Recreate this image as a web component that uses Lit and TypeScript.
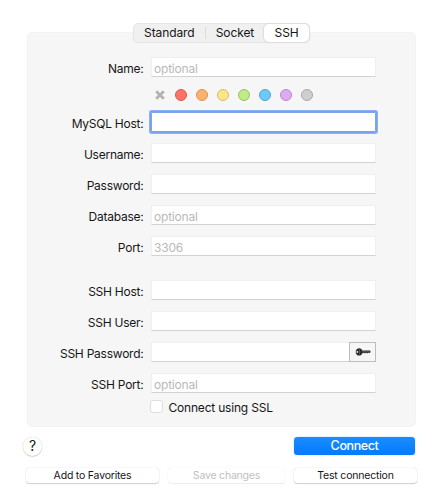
import { LitElement, html, css, nothing } from "lit";
import { customElement, property } from "lit/decorators.js";

@customElement("form-row")
class FormRow extends LitElement {
  @property() label = "";
  @property() hint = "";
  @property({ type: Boolean }) focused = false;
  @property({ type: Boolean }) secret = false;

  static styles = css`
    :host { display: flex; height: 31px; box-sizing: border-box; padding-top: 6px; }
    .label { width: 116.5px; text-align: right; line-height: 23px; margin-right: 7.5px; white-space: nowrap; letter-spacing: -.24px; }
    .field { display: flex; width: 225px; height: 20px; box-sizing: border-box; background: #fff;
      border: 1px solid #efefef; border-bottom-color: #d2d2d2; line-height: 21px; padding-left: 2px; color: #b9b9b9; letter-spacing: -.2px; }
    .focused { border: 0; box-shadow: 0 0 0 1px #74a3ea, 0 0 0 2px #8ab2f4, inset 0 0 0 1px #7ba5e8; height: 20px; border-radius: 1px; }
    .secret { width: 199px; border-right: 0; }
    .key { width: 27px; height: 20px; box-sizing: border-box; border: 1px solid #bdbdbd; background: #f6f6f6;
      display: flex; align-items: center; justify-content: center; margin-left: -1px; }
    .key svg { display: block; }
  `;

  render() {
    return html`
      <div class="label">${this.label}:</div>
      <div class="field ${this.focused ? "focused" : ""} ${this.secret ? "secret" : ""}">${this.hint}</div>
      ${this.secret
        ? html`<div class="key">
            <svg width="16" height="10" viewBox="0 0 16 10">
              <path fill="#2c2c2c" fill-rule="evenodd" d="M4.200 1.200C6 1.200 7 2.400 7.300 3.500H15l.7 1.200-.8 1.400h-1l-.6-.6-.7.7h-.9l-.6-.7-.7.7H9.500l-.6-.6-.7.6h-1C6.800 7.500 5.800 8.600 4.200 8.600 2.200 8.600.700 7 .700 4.900S2.200 1.200 4.200 1.200ZM2.300 4a.9.9 0 1 0 0 1.800.9.9 0 0 0 0-1.800Z"/>
              <path stroke="#777" stroke-width=".6" d="M4.500 2.500v4.800M7 4.700h7.500"/>
            </svg>
          </div>`
        : nothing}
    `;
  }
}

const COLORS = [
  ["#fd7366", "#d9594f"],
  ["#fdb26b", "#d9934f"],
  ["#fde588", "#d4bc68"],
  ["#bfec86", "#98c266"],
  ["#6bc9fb", "#4fa5d2"],
  ["#dfa9f3", "#b989cc"],
  ["#cfcfcf", "#a8a8a8"],
];

@customElement("app-root")
class AppRoot extends LitElement {
  static styles = css`
    :host { display: block; width: 441px; height: 500px; box-sizing: border-box; padding-top: 32px; background: #fff;
      font-family: Inter, sans-serif; font-size: 12px; color: #161616; overflow: hidden; }
    .panel { width: 389px; height: 395px; margin-left: 27px; box-sizing: border-box; border: 1px solid #f3f3f3;
      border-radius: 5px; background: #f6f6f6; display: flex; flex-direction: column; padding-right: 2px; }
    .tabs { align-self: center; display: flex; align-items: center; width: 177px; height: 20px; box-sizing: border-box; flex: none;
      margin: -10px 0 8px 2px; background: #f0f0f0; border: 1px solid #e5e5e5; border-radius: 5px; }
    .tab { text-align: center; line-height: 18px; height: 18px; box-sizing: border-box; white-space: nowrap; letter-spacing: -.1px; }
    .standard { width: 72px; border-right: 1px solid #dcdcdc; height: 12px; line-height: 12px; }
    .socket { width: 59px; }
    .active { width: 45px; background: #fff; border-radius: 5px; box-shadow: 0 0 1px 1px #ddd; }
    .rows { margin-left: -1px; }
    .dots { display: flex; align-items: center; height: 23px; padding-left: 127px; gap: 9px; padding-top: 1px; }
    .none, .dot { width: 12px; height: 12px; display: block; box-sizing: border-box; }
    .dot { border-radius: 50%; background: var(--fill); border: 1px solid var(--edge); }
    .ssh { margin-top: 13px; }
    .check { display: flex; align-items: center; height: 15px; padding-left: 123px; gap: 5.5px; margin-top: 1px; letter-spacing: -.2px; }
    .box { width: 13px; height: 13px; box-sizing: border-box; border: 1px solid #dedede; border-radius: 3px; background: #fff; }
    .check-label { line-height: 15px; padding-top: 1px; }
    .actions { display: flex; align-items: center; justify-content: space-between; height: 20px; margin: 9px 26px 0 23px; }
    .help { width: 19px; height: 19px; border-radius: 50%; text-align: center; line-height: 18px; font-size: 14px;
      background: #fff; box-shadow: 0 0 1px #bbb, 0 1px 1px #d4d4d4; }
    .connect { width: 121px; height: 18px; line-height: 18px; border-radius: 3.5px; background: linear-gradient(#1a8dff, #047aff);
      color: #fff; font-size: 12.5px; font-weight: 500; letter-spacing: -.4px; text-align: center; box-shadow: 0 0 1px #1680ef; }
    .bottom { display: flex; margin: 12px 0 0 26px; font-size: 10.5px; letter-spacing: -.2px; gap: 9px; }
    .button { height: 15px; line-height: 16px; text-align: center; border-radius: 3.5px; background: #fff;
      box-shadow: 0 0 1px #bbb, 0 1px 1px #d0d0d0; box-sizing: border-box; white-space: nowrap; }
    .add { width: 133px; }
    .save { width: 117px; color: #bfbfbf; box-shadow: 0 0 1px #ddd, 0 1px 1px #eee; }
    .test { width: 123px; }
  `;

  render() {
    return html`
      <div class="panel">
        <div class="tabs">
          <div class="tab standard">Standard</div>
          <div class="tab socket">Socket</div>
          <div class="tab active">SSH</div>
        </div>
        <div class="rows">
          <form-row label="Name" hint="optional"></form-row>
          <div class="dots">
            <svg class="none" viewBox="0 0 12 12"><path d="M2.200 2.200l7.600 7.600M9.800 2.200L2.200 9.800" stroke="#b2b2b2" stroke-width="2.700"/></svg>
            ${COLORS.map(([fill, edge]) => html`<span class="dot" style="--fill:${fill};--edge:${edge}"></span>`)}
          </div>
          <form-row label="MySQL Host" focused></form-row>
          <form-row label="Username"></form-row>
          <form-row label="Password"></form-row>
          <form-row label="Database" hint="optional"></form-row>
          <form-row label="Port" hint="3306"></form-row>
          <form-row class="ssh" label="SSH Host"></form-row>
          <form-row label="SSH User"></form-row>
          <form-row label="SSH Password" secret></form-row>
          <form-row label="SSH Port" hint="optional"></form-row>
          <div class="check"><span class="box"></span><span class="check-label">Connect using SSL</span></div>
        </div>
      </div>
      <div class="actions">
        <div class="help">?</div>
        <div class="connect">Connect</div>
      </div>
      <div class="bottom">
        <div class="button add">Add to Favorites</div>
        <div class="button save">Save changes</div>
        <div class="button test">Test connection</div>
      </div>
    `;
  }
}
